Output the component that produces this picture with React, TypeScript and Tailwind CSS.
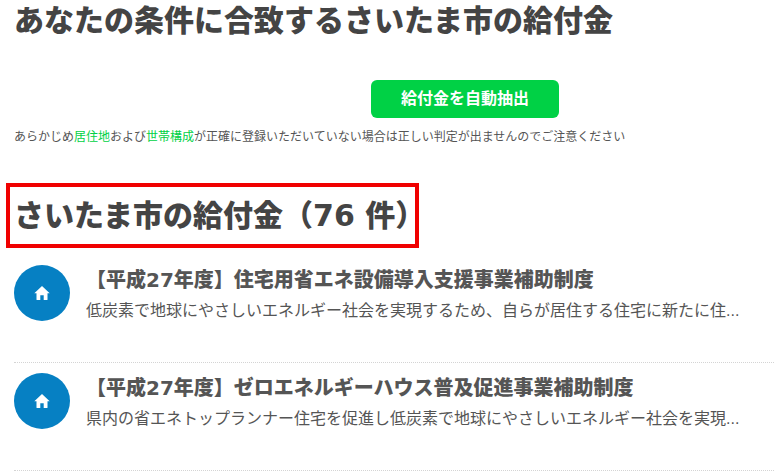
import React from "react"

const benefits = [
  {
    id: 1,
    title: "【平成27年度】住宅用省エネ設備導入支援事業補助制度",
    summary:
      "低炭素で地球にやさしいエネルギー社会を実現するため、自らが居住する住宅に新たに住...",
  },
  {
    id: 2,
    title: "【平成27年度】ゼロエネルギーハウス普及促進事業補助制度",
    summary:
      "県内の省エネトップランナー住宅を促進し低炭素で地球にやさしいエネルギー社会を実現...",
  },
]

const HomeIcon = () => {
  return (
    <svg viewBox="0 0 16 14" className="h-[14px] w-4 fill-white" aria-hidden="true">
      <path d="M8 0 .3 7.2h2.2v6.2q0 .6.6.6h3.2V9.2h3.4V14h3.2q.6 0 .6-.6V7.2h2.2z" />
    </svg>
  )
}

const BenefitItem = ({ title, summary }: { title: string; summary: string }) => {
  return (
    <li className="flex h-[108px] gap-4 border-b border-dotted border-[#d4d4d4] pt-[10px]">
      <div className="flex size-14 shrink-0 items-center justify-center rounded-full bg-[#0680c3]">
        <HomeIcon />
      </div>
      <div className="min-w-0 whitespace-nowrap">
        <h3 className="font-['DejaVu_Sans','Noto_Sans_CJK_JP',sans-serif] text-[20px] leading-[30px] font-black text-[#555555]">
          {title}
        </h3>
        <p className="text-[16px] leading-8 text-[#555555]">{summary}</p>
      </div>
    </li>
  )
}

export default function App() {
  return (
    <main className="overflow-hidden bg-white pl-[14px] font-['Liberation_Sans','Noto_Sans_CJK_JP',sans-serif] text-[#444444]">
      <h1 className="font-['DejaVu_Sans','Noto_Sans_CJK_JP',sans-serif] text-[30px] leading-[42px] font-black whitespace-nowrap">
        あなたの条件に合致するさいたま市の給付金
      </h1>
      <div className="mt-[38px] -mr-[142px] flex justify-center">
        <button className="h-[38px] rounded-md bg-[#00d145] px-[30px] text-[16px] leading-6 font-bold text-white">
          給付金を自動抽出
        </button>
      </div>
      <p className="mt-[9px] text-[12px] leading-5 whitespace-nowrap text-[#555555]">
        あらかじめ
        <a href="#address" className="text-[#00d145]">居住地</a>
        および
        <a href="#household" className="text-[#00d145]">世帯構成</a>
        が正確に登録いただいていない場合は正しい判定が出ませんのでご注意ください
      </p>
      <h2 className="mt-9 -ml-2 w-[413px] border-4 border-[#f00000] px-1 font-['DejaVu_Sans','Noto_Sans_CJK_JP',sans-serif] text-[30px] leading-[57px] font-black whitespace-nowrap">
        さいたま市の給付金（76 件）
      </h2>
      <ul className="mt-[7px]">
        {benefits.map((benefit) => (
          <BenefitItem key={benefit.id} title={benefit.title} summary={benefit.summary} />
        ))}
      </ul>
    </main>
  )
}
